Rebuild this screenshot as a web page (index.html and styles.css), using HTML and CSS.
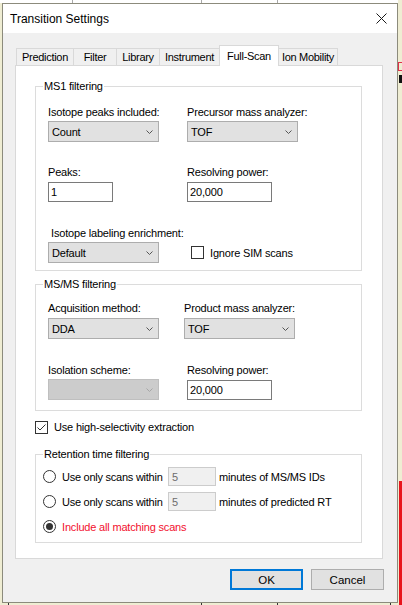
FILE: index.html
```html
<!DOCTYPE html>
<html>
<head>
<meta charset="utf-8">
<title>Transition Settings</title>
<link rel="stylesheet" href="styles.css">
</head>
<body>
<div class="strip-top"><span class="seg s1"></span><span class="seg s2"></span><span class="seg s3"></span><span class="seg s4"></span></div>
<div class="main">
  <div class="dialog">
    <div class="titlebar">
      <span class="title">Transition Settings</span>
      <svg class="close" width="11" height="11" viewBox="0 0 11 11"><path d="M0.5 0.5 L10.5 10.5 M10.5 0.5 L0.5 10.5" stroke="#1a1a1a" stroke-width="1" fill="none"/></svg>
    </div>
    <div class="client">
      <div class="tabs">
        <div class="tab t-pred">Prediction</div>
        <div class="tab t-filt">Filter</div>
        <div class="tab t-lib">Library</div>
        <div class="tab t-inst">Instrument</div>
        <div class="tab t-full sel">Full-Scan</div>
        <div class="tab t-ion">Ion Mobility</div>
      </div>
      <div class="panel">
        <div class="group g-ms1">
          <div class="legend">MS1 filtering</div>
          <div class="frow r-a">
            <div class="cell l">
              <div class="lbl">Isotope peaks included:</div>
              <div class="combo"><span>Count</span><svg class="chev" width="7" height="4" viewBox="0 0 7 4"><polyline points="0.5,0.5 3.5,3.5 6.5,0.5" fill="none" stroke="#555" stroke-width="1"/></svg></div>
            </div>
            <div class="cell">
              <div class="lbl">Precursor mass analyzer:</div>
              <div class="combo"><span>TOF</span><svg class="chev" width="7" height="4" viewBox="0 0 7 4"><polyline points="0.5,0.5 3.5,3.5 6.5,0.5" fill="none" stroke="#555" stroke-width="1"/></svg></div>
            </div>
          </div>
          <div class="frow r-b">
            <div class="cell l">
              <div class="lbl">Peaks:</div>
              <div class="tb g3 w65">1</div>
            </div>
            <div class="cell">
              <div class="lbl">Resolving power:</div>
              <div class="tb g3 w85">20,000</div>
            </div>
          </div>
          <div class="frow r-c">
            <div class="cell l">
              <div class="lbl ind">Isotope labeling enrichment:</div>
              <div class="combo"><span>Default</span><svg class="chev" width="7" height="4" viewBox="0 0 7 4"><polyline points="0.5,0.5 3.5,3.5 6.5,0.5" fill="none" stroke="#555" stroke-width="1"/></svg></div>
            </div>
            <div class="cell chk-cell">
              <div class="chkrow"><span class="chk"></span><span class="chk-lbl">Ignore SIM scans</span></div>
            </div>
          </div>
        </div>

        <div class="group g-msms">
          <div class="legend">MS/MS filtering</div>
          <div class="frow r-d">
            <div class="cell l narrow">
              <div class="lbl">Acquisition method:</div>
              <div class="combo g3"><span>DDA</span><svg class="chev" width="7" height="4" viewBox="0 0 7 4"><polyline points="0.5,0.5 3.5,3.5 6.5,0.5" fill="none" stroke="#555" stroke-width="1"/></svg></div>
            </div>
            <div class="cell">
              <div class="lbl">Product mass analyzer:</div>
              <div class="combo g3"><span>TOF</span><svg class="chev" width="7" height="4" viewBox="0 0 7 4"><polyline points="0.5,0.5 3.5,3.5 6.5,0.5" fill="none" stroke="#555" stroke-width="1"/></svg></div>
            </div>
          </div>
          <div class="frow r-e">
            <div class="cell l">
              <div class="lbl">Isolation scheme:</div>
              <div class="combo disabled"><span></span><svg class="chev" width="7" height="4" viewBox="0 0 7 4"><polyline points="0.5,0.5 3.5,3.5 6.5,0.5" fill="none" stroke="#a6a6a6" stroke-width="1"/></svg></div>
            </div>
            <div class="cell">
              <div class="lbl">Resolving power:</div>
              <div class="tb g3 w85">20,000</div>
            </div>
          </div>
        </div>

        <div class="hs-row">
          <span class="chk"><svg width="11" height="11" viewBox="0 0 11 11"><polyline points="1.5,5.5 4,8 9.5,2.5" fill="none" stroke="#333" stroke-width="1"/></svg></span>
          <span class="chk-lbl">Use high-selectivity extraction</span>
        </div>

        <div class="group g-rt">
          <div class="legend">Retention time filtering</div>
          <div class="rrow first">
            <span class="radio"></span>
            <span class="rlabel">Use only scans within</span>
            <span class="tb dis w48">5</span>
            <span class="after">minutes of MS/MS IDs</span>
          </div>
          <div class="rrow">
            <span class="radio"></span>
            <span class="rlabel">Use only scans within</span>
            <span class="tb dis w48">5</span>
            <span class="after">minutes of predicted RT</span>
          </div>
          <div class="rrow">
            <span class="radio on"><span class="dot"></span></span>
            <span class="rlabel red">Include all matching scans</span>
          </div>
        </div>
      </div>
      <div class="buttons">
        <div class="btn default">OK</div>
        <div class="btn">Cancel</div>
      </div>
    </div>
  </div>
  <div class="edge">
    <span class="e-sp1"></span>
    <span class="e-redbox"></span>
    <span class="e-sp2"></span>
    <span class="e-blk"></span>
    <span class="e-fill"></span>
    <span class="e-red"></span>
  </div>
</div>
<div class="strip-bottom"><span class="b b1"></span><span class="b b2"></span><span class="b b3"></span><span class="b b4"></span><span class="b-red"></span></div>
</body>
</html>
```

FILE: styles.css
```css
* { box-sizing: border-box; }
html, body { margin: 0; padding: 0; }
body {
  width: 402px;
  height: 605px;
  overflow: hidden;
  background: #efedd3;
  font-family: "Liberation Sans", Arial, sans-serif;
  font-size: 11px;
  letter-spacing: -0.18px;
  color: #000;
}

/* desktop strips */
.strip-top { display: flex; height: 3px; }
.strip-top .seg { height: 3px; background: #fff; }
.s1 { width: 72px; }
.s2 { width: 129px; border-left: 1px solid #a9a9a9; }
.s3 { width: 76px; border-left: 1px solid #a9a9a9; }
.s4 { width: 121px; border-left: 1px solid #a9a9a9; }

.main { display: flex; height: 600px; }

.edge { width: 4px; display: flex; flex-direction: column; align-items: flex-end; }
.e-sp1 { height: 59px; }
.e-redbox { height: 9px; width: 4px; border: 1px solid #e0304a; border-right: none; }
.e-sp2 { height: 4px; }
.e-blk { height: 8px; width: 3px; background: #111; }
.e-fill { flex: 1; }
.e-red { height: 122px; width: 3px; background: #e8141c; }

.strip-bottom { display: flex; height: 2px; }
.strip-bottom .b { height: 2px; border-right: 1px solid #333; }
.b1 { width: 9px; }
.b2 { width: 193px; }
.b3 { width: 76px; }
.b4 { width: 113px; }
.b-red { margin-left: 8px; width: 3px; background: #e8141c; }

/* dialog */
.dialog {
  margin-left: 2px;
  width: 396px;
  height: 600px;
  border: 1px solid #8c8b7c;
  background: #f0f0f0;
  display: flex;
  flex-direction: column;
}
.titlebar {
  height: 29px;
  background: #fff;
  display: flex;
  align-items: center;
  justify-content: space-between;
  padding-left: 7px;
}
.title { font-size: 12px; line-height: 14px; letter-spacing: 0; }
.close { margin-right: 10px; }

.client {
  flex: 1;
  padding: 12px 14px 0 12px;
  display: flex;
  flex-direction: column;
}

/* tabs */
.tabs {
  display: flex;
  align-items: flex-end;
  height: 20px;
  margin-left: 1px;
}
.tab {
  height: 17px;
  border-top: 1px solid #d9d9d9;
  border-left: 1px solid #d9d9d9;
  background: #f0f0f0;
  display: flex;
  align-items: center;
  justify-content: center;
  line-height: 14px;
  white-space: nowrap;
  letter-spacing: -0.3px;
}
.t-pred { width: 57px; }
.t-filt { width: 43px; }
.t-lib { width: 43px; }
.t-inst { width: 60px; }
.t-full { width: 60px; }
.t-ion { width: 59px; border-left: none; border-right: 1px solid #d9d9d9; }
.tab.sel {
  height: 21px;
  margin-bottom: -1px;
  background: #fff;
  border-right: 1px solid #d9d9d9;
  position: relative;
  z-index: 1;
  padding-bottom: 1px;
}

.panel {
  background: #fff;
  border: 1px solid #d9d9d9;
  padding: 20px 20px 15px 19px;
}

/* group boxes */
.group { border: 1px solid #dcdcdc; }
.legend {
  width: fit-content;
  margin: -8px 0 0 7px;
  padding: 0 1px;
  background: #fff;
  line-height: 14px;
  height: 14px;
  white-space: nowrap;
}
.g-ms1 { padding-bottom: 7px; }
.g-msms { margin-top: 13px; padding-bottom: 10px; }
.g-rt { margin-top: 20px; padding-bottom: 6px; }

.frow { display: flex; padding-left: 12px; }
.r-a { margin-top: 12px; }
.r-b { margin-top: 23px; }
.r-c { margin-top: 24px; }
.r-d { margin-top: 10px; }
.r-e { margin-top: 24px; }

.cell { display: flex; flex-direction: column; }
.cell.l { width: 139px; }
.cell.l.narrow { width: 136px; }

.lbl { line-height: 14px; height: 14px; white-space: nowrap; }
.lbl.ind { padding-left: 3px; }

.combo {
  margin-top: 2px;
  width: 111px;
  height: 21px;
  background: #e1e1e1;
  border: 1px solid #adadad;
  display: flex;
  align-items: center;
  justify-content: space-between;
  padding: 0 5px 0 3px;
  line-height: 14px;
}
.combo.g3 { margin-top: 3px; }
.combo.disabled { background: #cccccc; border-color: #bfbfbf; }
.chev { display: block; }

.tb {
  height: 20px;
  background: #fff;
  border: 1px solid #7a7a7a;
  padding-left: 2px;
  display: flex;
  align-items: center;
  line-height: 14px;
}
.tb.g3 { margin-top: 3px; }
.w65 { width: 65px; }
.w85 { width: 85px; }
.w48 { width: 48px; }
.tb.dis {
  height: 19px;
  background: #f0f0f0;
  border-color: #cccccc;
  color: #6d6d6d;
  padding-left: 3px;
}

.chk {
  width: 13px;
  height: 13px;
  border: 1px solid #333;
  background: #fff;
  display: flex;
  align-items: center;
  justify-content: center;
  flex: none;
}
.chk svg { display: block; }
.chk-lbl { line-height: 14px; white-space: nowrap; }

.chk-cell { padding-top: 16px; padding-left: 4px; }
.chkrow { height: 21px; display: flex; align-items: center; gap: 6px; }

.hs-row {
  margin-top: 9px;
  height: 14px;
  display: flex;
  align-items: center;
  gap: 6px;
}

/* radios */
.rrow {
  display: flex;
  align-items: center;
  height: 19px;
  margin-top: 6px;
  padding-left: 7px;
}
.rrow.first { margin-top: 6px; }
.radio {
  width: 13px;
  height: 13px;
  border: 1px solid #333;
  border-radius: 50%;
  background: #fff;
  margin-right: 6px;
  flex: none;
  display: flex;
  align-items: center;
  justify-content: center;
}
.radio .dot { width: 7px; height: 7px; border-radius: 50%; background: #333; }
.rlabel { width: 106px; white-space: nowrap; line-height: 14px; letter-spacing: -0.25px; }
.rlabel.red { color: #f2102e; width: auto; letter-spacing: -0.18px; }
.after { margin-left: 3px; white-space: nowrap; line-height: 14px; }

/* buttons */
.buttons {
  margin-top: 10px;
  margin-right: -1px;
  display: flex;
  justify-content: flex-end;
  gap: 8px;
}
.btn {
  width: 73px;
  height: 21px;
  background: #e1e1e1;
  border: 1px solid #adadad;
  display: flex;
  align-items: center;
  justify-content: center;
  font-size: 11.5px;
  letter-spacing: 0;
  line-height: 14px;
}
.btn.default { border: 2px solid #0078d7; }
```
